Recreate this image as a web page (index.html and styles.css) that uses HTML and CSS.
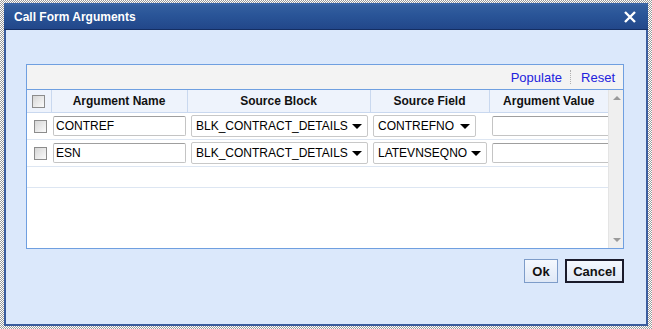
FILE: index.html
```html
<!DOCTYPE html>
<html lang="en">
<head>
    <meta charset="UTF-8">
    <title>Call Form Arguments</title>
    <link rel="stylesheet" href="styles.css">
</head>
<body>

<div class="dialog">
    <!-- Title bar -->
    <div class="title-bar">
        <span class="title">Call Form Arguments</span>
        <svg class="close" width="12" height="12" viewBox="0 0 12 12">
            <path d="M1 1 L11 11 M11 1 L1 11" stroke="#fff" stroke-width="2.4"/>
        </svg>
    </div>

    <div class="dialog-body">
        <div class="grid-panel">
            <div class="toolbar">
                <a class="tool-link">Populate</a>
                <span class="tool-sep"></span>
                <a class="tool-link">Reset</a>
            </div>
            <div class="grid-wrap">
                <table class="grid">
                    <colgroup>
                        <col class="c-check">
                        <col class="c-name">
                        <col class="c-block">
                        <col class="c-field">
                        <col class="c-value">
                    </colgroup>
                    <thead>
                        <tr>
                            <th><span class="check"></span></th>
                            <th>Argument Name</th>
                            <th>Source Block</th>
                            <th>Source Field</th>
                            <th>Argument Value</th>
                        </tr>
                    </thead>
                    <tbody>
                        <tr>
                            <td class="td-check"><span class="check"></span></td>
                            <td class="td-name"><div class="text-box name-box">CONTREF</div></td>
                            <td><div class="drop block-drop"><span>BLK_CONTRACT_DETAILS</span><i class="arrow"></i></div></td>
                            <td class="td-field"><div class="drop field-drop"><span>CONTREFNO</span><i class="arrow"></i></div></td>
                            <td class="td-field"><div class="text-box value-box"></div></td>
                        </tr>
                        <tr>
                            <td class="td-check"><span class="check"></span></td>
                            <td class="td-name"><div class="text-box name-box">ESN</div></td>
                            <td><div class="drop block-drop"><span>BLK_CONTRACT_DETAILS</span><i class="arrow"></i></div></td>
                            <td class="td-field"><div class="drop field-drop-wide"><span>LATEVNSEQNO</span><i class="arrow"></i></div></td>
                            <td class="td-field"><div class="text-box value-box"></div></td>
                        </tr>
                        <tr class="empty-row">
                            <td></td><td></td><td></td><td></td><td></td>
                        </tr>
                    </tbody>
                </table>
                <div class="scrollbar">
                    <i class="scroll-up"></i>
                    <i class="scroll-down"></i>
                </div>
            </div>
        </div>

        <div class="buttons">
            <button class="btn btn-ok">Ok</button>
            <button class="btn btn-focus">Cancel</button>
        </div>
    </div>
</div>

</body>
</html>
```

FILE: styles.css
```css
html, body {
    margin: 0;
    padding: 0;
}

body {
    width: 652px;
    height: 329px;
    box-sizing: border-box;
    padding: 3px 4px;
    font-family: Arial, "Liberation Sans", sans-serif;
    font-size: 12px;
    color: #000;
    background-color: #d8d8d8;
    background-image: repeating-conic-gradient(#9a9a9a 0 25%, #ffffff 0 50%);
    background-size: 2px 2px;
    overflow: hidden;
}

.dialog {
    width: 644px;
    height: 323px;
    box-sizing: border-box;
    border: 2px solid #3a5c9d;
    border-top: none;
    background-color: #dbe8fb;
    display: flex;
    flex-direction: column;
}

.title-bar {
    height: 27px;
    box-sizing: border-box;
    margin: 0 -2px;
    padding: 0 10px;
    display: flex;
    align-items: center;
    justify-content: space-between;
    background: linear-gradient(#35609f, #2a5598 40%, #22478a);
    border-top: 2px solid #3c66a6;
    border-bottom: 1px solid #142e63;
}

.title {
    color: #fff;
    font-weight: bold;
    font-size: 12px;
    padding-left: 0;
    margin-top: -1px;
}

.close {
    margin-right: 2px;
}

.dialog-body {
    flex: 1;
    padding: 34px 22px 0 20px;
    display: flex;
    flex-direction: column;
}

/* Grid panel */
.grid-panel {
    height: 185px;
    box-sizing: border-box;
    border: 1px solid #6f9fe0;
    background-color: #fff;
    display: flex;
    flex-direction: column;
}

.toolbar {
    height: 24px;
    background-color: #f3f3f3;
    display: flex;
    align-items: center;
    justify-content: flex-end;
    padding-right: 8px;
    border-bottom: 1px solid #6f9fe0;
}

.tool-link {
    color: #2222dd;
    font-size: 13px;
    cursor: pointer;
}

.tool-sep {
    width: 0;
    height: 14px;
    border-left: 1px dotted #b0b0b0;
    margin: 0 10px 0 8px;
}

.grid-wrap {
    flex: 1;
    display: flex;
    overflow: hidden;
}

.grid {
    width: 581px;
    table-layout: fixed;
    border-collapse: collapse;
    align-self: flex-start;
}

.c-check { width: 24px; }
.c-name { width: 136px; }
.c-block { width: 183px; }
.c-field { width: 119px; }
.c-value { width: 119px; }

.grid th {
    height: 22px;
    padding: 0;
    background-color: #eef3fc;
    border-right: 1px solid #c9d8ef;
    border-bottom: 1px solid #c9d8ef;
    font-weight: bold;
    font-size: 12px;
    text-align: center;
    color: #111;
}

.grid th:last-child {
    border-right: none;
}

.grid td {
    height: 26px;
    padding: 0 0 0 4px;
    border-bottom: 1px solid #dde6f2;
    white-space: nowrap;
    overflow: hidden;
}

.grid td.td-check {
    padding: 0 0 0 2px;
    text-align: center;
}

.grid td.td-name {
    padding-left: 2px;
}

.grid td.td-field {
    padding-left: 3px;
}

.grid .empty-row td {
    height: 20px;
}

.check {
    display: inline-block;
    width: 11px;
    height: 11px;
    border: 1px solid #8c8c8c;
    background: linear-gradient(135deg, #d6d6d6, #fbfbfb);
    vertical-align: middle;
}

th .check {
    margin-left: 0;
}

.text-box {
    height: 20px;
    box-sizing: border-box;
    border: 1px solid #c4c4c4;
    border-top-color: #9f9f9f;
    border-radius: 2px;
    background-color: #fff;
    padding: 0 2px;
    font-size: 12px;
    line-height: 18px;
}

.name-box {
    width: 133px;
}

.value-box {
    width: 130px;
}

.drop {
    height: 22px;
    box-sizing: border-box;
    border: 1px solid #c8c8c8;
    border-radius: 2px;
    background-color: #fff;
    display: flex;
    align-items: center;
    padding: 0 5px 0 4px;
    font-size: 12px;
}

.drop span {
    flex: 1;
}

.block-drop { width: 177px; }
.field-drop { width: 103px; }
.field-drop-wide { width: 114px; }

.arrow {
    width: 0;
    height: 0;
    border-left: 5px solid transparent;
    border-right: 5px solid transparent;
    border-top: 5px solid #000;
}

.scrollbar {
    width: 16px;
    margin-left: auto;
    background-color: #efefef;
    border-left: 1px solid #e4e4e4;
    position: relative;
}

.scroll-up, .scroll-down {
    position: absolute;
    left: 4px;
    width: 0;
    height: 0;
    border-left: 4px solid transparent;
    border-right: 4px solid transparent;
}

.scroll-up {
    top: 6px;
    border-bottom: 4px solid #9a9a9a;
}

.scroll-down {
    bottom: 6px;
    border-top: 4px solid #9a9a9a;
}

/* Buttons */
.buttons {
    display: flex;
    justify-content: flex-end;
    gap: 7px;
    margin-top: 10px;
}

.btn {
    height: 24px;
    padding: 0 7px;
    font-family: Arial, "Liberation Sans", sans-serif;
    font-size: 13px;
    font-weight: bold;
    color: #111;
    background: linear-gradient(#f4f8fe, #dfe8f6);
    border: 1px solid #7d9cc9;
    border-radius: 0;
}

.btn-ok {
    width: 34px;
}

.btn-focus {
    width: 59px;
    border: 2px solid #1a1a2a;
    padding: 0 5px;
}
```
